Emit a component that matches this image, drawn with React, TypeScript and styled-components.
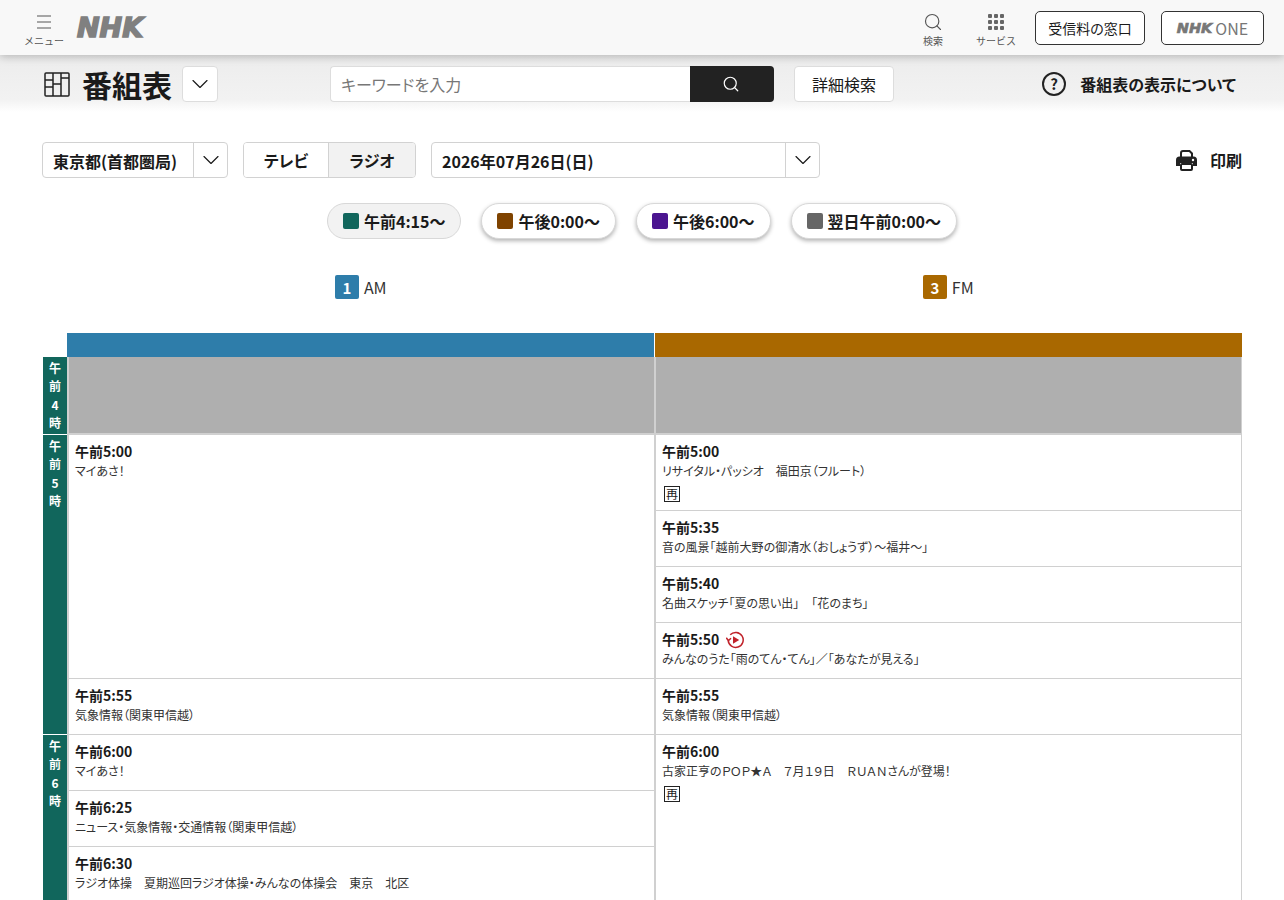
import styled, { createGlobalStyle } from 'styled-components';
import { ChevronDown, Search } from 'lucide-react';

const GlobalStyle = createGlobalStyle`
  html, body {
    margin: 0;
    padding: 0;
    height: 900px;
    overflow: hidden;
    background: #fff;
  }
  body {
    font-family: "Noto Sans CJK JP", "Noto Sans", sans-serif;
    color: #1a1a1a;
    font-feature-settings: "palt";
  }
  * { box-sizing: border-box; }
`;

const Page = styled.div`
  width: 1284px;
  height: 900px;
  overflow: hidden;
`;

const TopBar = styled.header`
  position: relative;
  z-index: 2;
  height: 55px;
  background: #f8f8f8;
  box-shadow: 0 2px 8px rgba(0, 0, 0, 0.22);
  display: flex;
  align-items: center;
  padding: 0 20px 0 24px;
`;

const IconButton = styled.div<{ $width: number; $gap?: number }>`
  width: ${(p) => p.$width}px;
  margin-left: ${(p) => p.$gap ?? 0}px;
  display: flex;
  flex-direction: column;
  align-items: center;
  color: #555;
  font-size: 10px;
  line-height: 12px;
  font-feature-settings: normal;
`;

const IconSlot = styled.div`
  height: 26px;
  display: flex;
  align-items: center;
  justify-content: center;
`;

const Logo = styled.div`
  margin-left: 13px;
  font-family: "DejaVu Sans", sans-serif;
  font-weight: 700;
  font-style: italic;
  font-size: 27px;
  line-height: 30px;
  color: #808080;
  -webkit-text-stroke: 1.6px #808080;
`;

const Spacer = styled.div`
  flex: 1;
`;

const ServiceDots = styled.div`
  display: grid;
  grid-template-columns: repeat(3, 4px);
  gap: 2px;

  span {
    width: 4px;
    height: 4px;
    border-radius: 1px;
    background: #666;
  }
`;

const OutlineLink = styled.div<{ $width: number; $gap: number }>`
  width: ${(p) => p.$width}px;
  height: 34px;
  margin-left: ${(p) => p.$gap}px;
  border: 1px solid #333;
  border-radius: 5px;
  background: #fff;
  display: flex;
  align-items: center;
  justify-content: center;
  gap: 3px;
  font-size: 14px;
`;

const OneLogo = styled.span`
  font-family: "DejaVu Sans", sans-serif;
  font-weight: 700;
  font-style: italic;
  font-size: 14.5px;
  color: #777;
  -webkit-text-stroke: 0.7px #777;
`;

const OneText = styled.span`
  color: #777;
  font-size: 16px;
`;

const TitleBar = styled.div`
  height: 57px;
  background: linear-gradient(#ececec, #f2f2f2 78%, #fff);
  display: flex;
  align-items: center;
  padding: 0 48px 0 44px;
`;

const Title = styled.h1`
  margin: 0 0 0 12px;
  font-size: 30px;
  line-height: 40px;
  font-weight: 700;
`;

const SquareButton = styled.div`
  width: 36px;
  height: 36px;
  margin-left: 10px;
  background: #fff;
  border: 1px solid #ddd;
  border-radius: 4px;
  display: flex;
  align-items: center;
  justify-content: center;
`;

const SearchBox = styled.div`
  width: 444px;
  height: 36px;
  margin-left: 112px;
  display: flex;
`;

const SearchInput = styled.div`
  flex: 1;
  background: #fff;
  border: 1px solid #ddd;
  border-right: 0;
  border-radius: 4px 0 0 4px;
  padding-left: 10px;
  font-size: 16px;
  line-height: 34px;
  color: #777;
`;

const SearchSubmit = styled.div`
  width: 84px;
  padding-right: 2px;
  background: #222;
  border-radius: 0 4px 4px 0;
  display: flex;
  align-items: center;
  justify-content: center;
  color: #fff;
`;

const DetailButton = styled.div`
  width: 100px;
  height: 36px;
  margin-left: 20px;
  background: #fff;
  border: 1px solid #ddd;
  border-radius: 4px;
  font-size: 16px;
  display: flex;
  align-items: center;
  justify-content: center;
`;

const HelpLink = styled.div`
  display: flex;
  align-items: center;
  gap: 13px;
  font-size: 16px;
  font-weight: 700;
`;

const Content = styled.main`
  padding: 30px 42px 0;
`;

const Controls = styled.div`
  display: flex;
  align-items: center;
  height: 36px;
`;

const Field = styled.div<{ $width: number; $gap?: number }>`
  width: ${(p) => p.$width}px;
  height: 36px;
  margin-left: ${(p) => p.$gap ?? 0}px;
  border: 1px solid #d2d2d2;
  border-radius: 4px;
  display: flex;
  align-items: stretch;
  font-size: 16px;
  font-weight: 700;
  overflow: hidden;
`;

const FieldText = styled.div`
  flex: 1;
  padding-left: 10px;
  line-height: 36px;
  border-right: 1px solid #d2d2d2;
`;

const FieldCaret = styled.div`
  width: 33px;
  display: flex;
  align-items: center;
  justify-content: center;
`;

const Tab = styled.div<{ $active?: boolean }>`
  flex: ${(p) => (p.$active ? '1' : '0 0 84px')};
  display: flex;
  align-items: center;
  justify-content: center;
  background: ${(p) => (p.$active ? '#f2f2f2' : '#fff')};
  border-left: ${(p) => (p.$active ? '1px solid #d2d2d2' : '0')};
`;

const PrintLink = styled.div`
  margin-left: auto;
  display: flex;
  align-items: center;
  gap: 13px;
  font-size: 16px;
  font-weight: 700;
`;

const Pills = styled.div`
  display: flex;
  justify-content: center;
  gap: 20px;
  margin: 25px 0 0 0;
`;

const Pill = styled.div<{ $active?: boolean }>`
  height: 36px;
  padding: 0 15px;
  border-radius: 18px;
  border: 1px solid #d8d8d8;
  background: ${(p) => (p.$active ? '#f2f2f2' : '#fff')};
  box-shadow: ${(p) => (p.$active ? 'none' : '0 2px 4px rgba(0, 0, 0, 0.3)')};
  display: flex;
  align-items: center;
  gap: 5px;
  font-size: 16px;
  font-weight: 700;
`;

const Swatch = styled.span<{ $color: string }>`
  width: 16px;
  height: 16px;
  border-radius: 2px;
  background: ${(p) => p.$color};
`;

const Channels = styled.div`
  display: flex;
  margin: 36px 0 0 25px;
  height: 24px;
`;

const ChannelName = styled.div`
  flex: 1;
  display: flex;
  align-items: center;
  justify-content: center;
  gap: 5px;
  font-size: 16px;
  color: #333;
`;

const ChannelBadge = styled.span<{ $color: string }>`
  width: 24px;
  height: 24px;
  border-radius: 2px;
  background: ${(p) => p.$color};
  color: #fff;
  font-weight: 700;
  font-size: 15px;
  display: flex;
  align-items: center;
  justify-content: center;
`;

const Schedule = styled.div`
  display: flex;
  margin-top: 34px;
`;

const Hours = styled.div`
  width: 25px;
  padding: 24px 0 0 1px;
  flex-shrink: 0;
`;

const Hour = styled.div<{ $height: number }>`
  width: 24px;
  height: ${(p) => p.$height}px;
  margin-bottom: 1px;
  padding-top: 2px;
  background: #11665c;
  color: #fff;
  font-size: 12px;
  font-weight: 700;
  line-height: 18.3px;
  text-align: center;
`;

const Column = styled.div`
  flex: 1;
  min-width: 0;

  & + & {
    margin-left: 1px;
  }
`;

const ColumnHead = styled.div<{ $color: string }>`
  height: 24px;
  background: ${(p) => p.$color};
`;

const Body = styled.div<{ $last?: boolean }>`
  border-left: 2px solid #d0d0d0;
  border-right: ${(p) => (p.$last ? '1px solid #d0d0d0' : '0')};
  margin-left: ${(p) => (p.$last ? '-1px' : '0')};
`;

const Blank = styled.div`
  height: 78px;
  background: #afafaf;
  border-bottom: 2px solid #d0d0d0;
`;

const Cell = styled.div<{ $height: number }>`
  height: ${(p) => p.$height}px;
  padding: 6px 6px 0;
  border-bottom: 1px solid #d0d0d0;
  overflow: hidden;
`;

const Time = styled.div`
  display: flex;
  align-items: center;
  gap: 7px;
  font-size: 14px;
  font-weight: 700;
  line-height: 21px;
`;

const Desc = styled.div`
  font-size: 12px;
  line-height: 17px;
  color: #333;
  white-space: pre;
`;

const Rerun = styled.span`
  display: block;
  width: 16px;
  height: 16px;
  margin: 7px 0 0 2px;
  border: 1px solid #222;
  font-size: 12px;
  line-height: 14px;
  text-align: center;
`;

type Program = { time: string; desc: string; height: number; rerun?: boolean; replay?: boolean };

const am: Program[] = [
  { time: '午前5:00', desc: 'マイあさ！', height: 244 },
  { time: '午前5:55', desc: '気象情報（関東甲信越）', height: 56 },
  { time: '午前6:00', desc: 'マイあさ！', height: 56 },
  { time: '午前6:25', desc: 'ニュース・気象情報・交通情報（関東甲信越）', height: 56 },
  { time: '午前6:30', desc: 'ラジオ体操　夏期巡回ラジオ体操・みんなの体操会　東京　北区', height: 100 },
];

const fm: Program[] = [
  { time: '午前5:00', desc: 'リサイタル・パッシオ　福田京（フルート）', height: 76, rerun: true },
  { time: '午前5:35', desc: '音の風景「越前大野の御清水（おしょうず）～福井～」', height: 56 },
  { time: '午前5:40', desc: '名曲スケッチ「夏の思い出」　「花のまち」', height: 56 },
  { time: '午前5:50', desc: 'みんなのうた「雨のてん・てん」／「あなたが見える」', height: 56, replay: true },
  { time: '午前5:55', desc: '気象情報（関東甲信越）', height: 56 },
  { time: '午前6:00', desc: '古家正亨のＰＯＰ★Ａ　７月１９日　ＲＵＡＮさんが登場！', height: 212, rerun: true },
];

const hours = [
  { label: ['午', '前', '4', '時'], height: 77 },
  { label: ['午', '前', '5', '時'], height: 299 },
  { label: ['午', '前', '6', '時'], height: 200 },
];

const pills = [
  { label: '午前4:15～', color: '#11665c', active: true },
  { label: '午後0:00～', color: '#7f4300' },
  { label: '午後6:00～', color: '#4b1590' },
  { label: '翌日午前0:00～', color: '#666666' },
];

function ProgramCell({ program }: { program: Program }) {
  return (
    <Cell $height={program.height}>
      <Time>
        {program.time}
        {program.replay && (
          <svg width="19" height="18" viewBox="0 0 19 18" fill="none">
            <path d="M4.2 3.8A7.5 7.5 0 1 1 2.2 9.4" stroke="#c0222a" strokeWidth="1.5" />
            <path d="M0.3 6.8 L2.4 9.6 L5 7.3" stroke="#c0222a" strokeWidth="1.5" />
            <path d="M7 5.2 L13.2 9 L7 12.8Z" fill="#c0222a" />
          </svg>
        )}
      </Time>
      <Desc>{program.desc}</Desc>
      {program.rerun && <Rerun>再</Rerun>}
    </Cell>
  );
}

export default function App() {
  return (
    <Page>
      <GlobalStyle />
      <TopBar>
        <IconButton $width={40}>
          <IconSlot>
            <svg width="14" height="14" viewBox="0 0 14 14" stroke="#555" strokeWidth="1.2">
              <path d="M0 1H14M0 7H14M0 13H14" />
            </svg>
          </IconSlot>
          メニュー
        </IconButton>
        <Logo>NHK</Logo>
        <Spacer />
        <IconButton $width={40}>
          <IconSlot>
            <Search size={20} strokeWidth={1.4} />
          </IconSlot>
          検索
        </IconButton>
        <IconButton $width={58} $gap={14}>
          <IconSlot>
            <ServiceDots>
              {Array.from({ length: 9 }, (_, i) => (
                <span key={i} />
              ))}
            </ServiceDots>
          </IconSlot>
          サービス
        </IconButton>
        <OutlineLink $width={110} $gap={10}>受信料の窓口</OutlineLink>
        <OutlineLink $width={103} $gap={16}>
          <OneLogo>NHK</OneLogo>
          <OneText>ONE</OneText>
        </OutlineLink>
      </TopBar>
      <TitleBar>
        <svg width="26" height="26" viewBox="0 0 26 26" fill="none" stroke="#222" strokeWidth="1.5">
          <rect x="1" y="2" width="24" height="23" rx="1" />
          <path d="M9 2V25M17 2V25M1 9H9M1 16H9M9 13H17M17 7H25" />
        </svg>
        <Title>番組表</Title>
        <SquareButton>
          <ChevronDown size={28} strokeWidth={1} />
        </SquareButton>
        <SearchBox>
          <SearchInput>キーワードを入力</SearchInput>
          <SearchSubmit>
            <Search size={18} strokeWidth={1.6} />
          </SearchSubmit>
        </SearchBox>
        <DetailButton>詳細検索</DetailButton>
        <Spacer />
        <HelpLink>
          <svg width="26" height="26" viewBox="0 0 26 26" fill="none">
            <circle cx="13" cy="13" r="11" stroke="#222" strokeWidth="2" />
            <text x="13" y="18.5" textAnchor="middle" fontSize="15" fontWeight="700" fill="#222">?</text>
          </svg>
          番組表の表示について
        </HelpLink>
      </TitleBar>
      <Content>
        <Controls>
          <Field $width={186}>
            <FieldText>東京都(首都圏局)</FieldText>
            <FieldCaret><ChevronDown size={28} strokeWidth={1} /></FieldCaret>
          </Field>
          <Field $width={173} $gap={15}>
            <Tab>テレビ</Tab>
            <Tab $active>ラジオ</Tab>
          </Field>
          <Field $width={389} $gap={15}>
            <FieldText>2026年07月26日(日)</FieldText>
            <FieldCaret><ChevronDown size={28} strokeWidth={1} /></FieldCaret>
          </Field>
          <PrintLink>
            <svg width="21" height="21" viewBox="0 0 21 21" fill="none">
              <path d="M5 7V3A2 2 0 0 1 7 1H13.5L16 3.5V7" stroke="#222" strokeWidth="2" />
              <path d="M3.5 6.5H17.5A3.5 3.5 0 0 1 21 10V16H17V13H4V16H0V10A3.5 3.5 0 0 1 3.5 6.5Z" fill="#222" />
              <rect x="5" y="14" width="11" height="6" stroke="#222" strokeWidth="2" rx="1" />
              <circle cx="17" cy="10" r="1.2" fill="#fff" />
            </svg>
            印刷
          </PrintLink>
        </Controls>
        <Pills>
          {pills.map((pill) => (
            <Pill key={pill.label} $active={pill.active}>
              <Swatch $color={pill.color} />
              {pill.label}
            </Pill>
          ))}
        </Pills>
        <Channels>
          <ChannelName><ChannelBadge $color="#2e7daa">1</ChannelBadge>AM</ChannelName>
          <ChannelName><ChannelBadge $color="#a96800">3</ChannelBadge>FM</ChannelName>
        </Channels>
        <Schedule>
          <Hours>
            {hours.map((hour) => (
              <Hour key={hour.label[2]} $height={hour.height}>
                {hour.label.map((ch) => (
                  <div key={ch}>{ch}</div>
                ))}
              </Hour>
            ))}
          </Hours>
          <Column>
            <ColumnHead $color="#2e7daa" />
            <Body>
              <Blank />
              {am.map((program) => (
                <ProgramCell key={program.time} program={program} />
              ))}
            </Body>
          </Column>
          <Column>
            <ColumnHead $color="#a96800" />
            <Body $last>
              <Blank />
              {fm.map((program) => (
                <ProgramCell key={program.time} program={program} />
              ))}
            </Body>
          </Column>
        </Schedule>
      </Content>
    </Page>
  );
}
